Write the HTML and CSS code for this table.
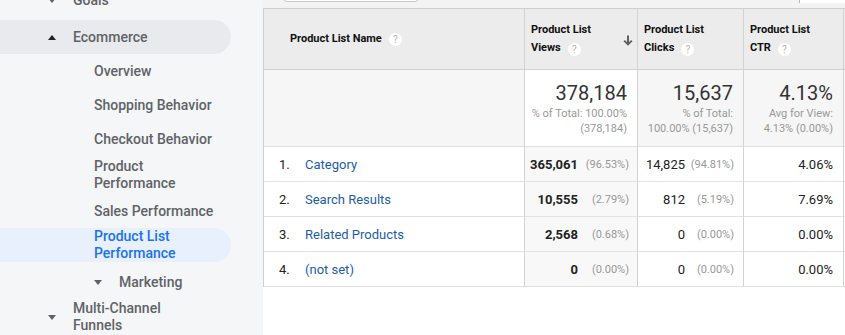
FILE: index.html
```html
<!DOCTYPE html>
<html>
<head>
<meta charset="utf-8">
<link rel="stylesheet" href="styles.css">
</head>
<body>
<div class="page">
  <nav class="sidebar">
    <div class="item lvl1 first"><span class="caret down"></span><span class="label">Goals</span></div>
    <div class="item lvl1 open"><span class="caret up"></span><span class="label">Ecommerce</span></div>
    <div class="item lvl2"><span class="label">Overview</span></div>
    <div class="item lvl2"><span class="label">Shopping Behavior</span></div>
    <div class="item lvl2"><span class="label">Checkout Behavior</span></div>
    <div class="item lvl2 two pp"><span class="label">Product<br>Performance</span></div>
    <div class="item lvl2"><span class="label">Sales Performance</span></div>
    <div class="item lvl2 two active"><span class="label">Product List<br>Performance</span></div>
    <div class="item lvl2 sub mk"><span class="caret down"></span><span class="label">Marketing</span></div>
    <div class="item lvl1 two mcf"><span class="caret down"></span><span class="label">Multi-Channel<br>Funnels</span></div>
  </nav>
  <main class="main">
    <div class="topbar">
      <div class="search"></div>
      <div class="topbox"></div>
    </div>
    <div class="grid">
      <div class="cell hd name-hd"><span>Product List Name</span><span class="help">?</span></div>
      <div class="cell hd metric-hd"><span class="hd-text">Product List<br>Views<span class="help">?</span></span>
        <svg class="sort" width="10" height="11" viewBox="0 0 10 11"><path d="M5 0.5v8.5M1.2 5.6L5 9.4l3.8-3.8" fill="none" stroke="#616161" stroke-width="2"/></svg></div>
      <div class="cell hd metric-hd"><span class="hd-text">Product List<br>Clicks<span class="help">?</span></span></div>
      <div class="cell hd metric-hd"><span class="hd-text">Product List<br>CTR<span class="help">?</span></span></div>
      <div class="cell hd extra"></div>

      <div class="cell sum gray"></div>
      <div class="cell sum"><div class="big">378,184</div><div class="small">% of Total: 100.00%<br>(378,184)</div></div>
      <div class="cell sum gray"><div class="big">15,637</div><div class="small">% of Total:<br>100.00% (15,637)</div></div>
      <div class="cell sum gray"><div class="big">4.13%</div><div class="small">Avg for View:<br>4.13% (0.00%)</div></div>
      <div class="cell sum gray extra"></div>

      <div class="cell row namec"><span class="idx">1.</span><a class="lnk">Category</a></div>
      <div class="cell row num sorted"><b>365,061</b><span class="pct">(96.53%)</span></div>
      <div class="cell row num clk"><span>14,825</span><span class="pct">(94.81%)</span></div>
      <div class="cell row num ctr">4.06%</div>
      <div class="cell row extra"></div>

      <div class="cell row namec"><span class="idx">2.</span><a class="lnk">Search Results</a></div>
      <div class="cell row num sorted"><b>10,555</b><span class="pct">(2.79%)</span></div>
      <div class="cell row num clk"><span>812</span><span class="pct">(5.19%)</span></div>
      <div class="cell row num ctr">7.69%</div>
      <div class="cell row extra"></div>

      <div class="cell row namec"><span class="idx">3.</span><a class="lnk">Related Products</a></div>
      <div class="cell row num sorted"><b>2,568</b><span class="pct">(0.68%)</span></div>
      <div class="cell row num clk"><span>0</span><span class="pct">(0.00%)</span></div>
      <div class="cell row num ctr">0.00%</div>
      <div class="cell row extra"></div>

      <div class="cell row namec"><span class="idx">4.</span><a class="lnk">(not set)</a></div>
      <div class="cell row num sorted"><b>0</b><span class="pct">(0.00%)</span></div>
      <div class="cell row num clk"><span>0</span><span class="pct">(0.00%)</span></div>
      <div class="cell row num ctr">0.00%</div>
      <div class="cell row extra"></div>
    </div>
  </main>
</div>
</body>
</html>
```

FILE: styles.css
```css
html, body {
  margin: 0;
  padding: 0;
}
body {
  width: 845px;
  height: 335px;
  overflow: hidden;
  background: #ffffff;
  font-family: Roboto, "Liberation Sans", Arial, sans-serif;
}
.page {
  display: flex;
  width: 845px;
  height: 335px;
  overflow: hidden;
}

/* Sidebar */
.sidebar {
  width: 263px;
  flex: 0 0 263px;
  background: #f5f6f7;
  margin-top: -17px;
  display: flex;
  flex-direction: column;
}
.item {
  display: flex;
  align-items: center;
  min-height: 34px;
  width: 231px;
  box-sizing: border-box;
  font-size: 14px;
  line-height: 17px;
  color: #5f6368;
  font-weight: 500;
  border-radius: 0 17px 17px 0;
  flex: 0 0 auto;
}
.item.lvl1 { padding-left: 48px; }
.item.lvl2 { padding-left: 94px; }
.item.sub { padding-left: 94px; }
.item.open {
  background: #e8eaed;
  margin-top: 3px;
}
.item.pp { margin: 2px 0 2px; }
.item.active {
  background: #e8f0fe;
  color: #1a73e8;
}
.item.mk { margin-top: 3px; }
.item.mcf { margin-top: 1px; }
.caret {
  width: 0;
  height: 0;
  border-left: 4px solid transparent;
  border-right: 4px solid transparent;
  margin-right: 17px;
}
.caret.down { border-top: 5px solid #5f6368; }
.caret.up { border-bottom: 5px solid #202124; }

/* Main */
.main {
  flex: 1 1 auto;
  min-width: 0;
  background: #ffffff;
  overflow: hidden;
}
.topbar {
  height: 8px;
  background: #f3f3f3;
  position: relative;
  overflow: hidden;
}
.search {
  position: absolute;
  left: 20px;
  top: -10px;
  width: 136px;
  height: 12px;
  background: #ffffff;
  border: 1px solid #c8c8c8;
  border-radius: 4px;
  box-sizing: border-box;
}
.topbox {
  position: absolute;
  left: 536px;
  top: -2px;
  width: 60px;
  height: 5px;
  background: #ffffff;
  border-left: 1px solid #b8b8b8;
}
.grid {
  display: grid;
  grid-template-columns: 261px 113px 106px 100px 40px;
  grid-template-rows: 61px 77px 35px 35px 35px 35px;
  border-top: 1px solid #d0d0d0;
  border-left: 1px solid #d0d0d0;
  width: max-content;
}
.cell {
  box-sizing: border-box;
  border-right: 1px solid #d3d3d3;
  border-bottom: 1px solid #e2e2e2;
  color: #222;
}
.hd {
  background: #ececec;
  border-bottom-color: #d0d0d0;
  font-size: 11px;
  font-weight: 700;
  line-height: 18px;
  color: #111;
  display: flex;
  align-items: center;
}
.name-hd { padding-left: 26px; }
.metric-hd {
  padding-left: 6px;
  position: relative;
}
.help {
  display: inline-block;
  width: 13px;
  height: 13px;
  border-radius: 50%;
  background: #ffffff;
  color: #b5b5b5;
  font-size: 10px;
  line-height: 13px;
  text-align: center;
  font-weight: 400;
  margin-left: 7px;
  vertical-align: -2px;
}
.sort {
  position: absolute;
  right: 4px;
  top: 26px;
}
.sum {
  padding: 10px 10px 0 6px;
  text-align: right;
  background: #ffffff;
  border-bottom-color: #dedede;
}
.sum.gray { background: #f6f6f6; }
.big {
  font-size: 20px;
  line-height: 26px;
  color: #333;
}
.small {
  font-size: 11px;
  line-height: 15px;
  color: #999;
}
.row {
  display: flex;
  align-items: center;
  font-size: 13px;
  color: #222;
}
.namec { padding-left: 15px; }
.idx {
  width: 26px;
  flex: 0 0 26px;
}
.lnk {
  color: #1c5ea8;
}
.num {
  justify-content: flex-end;
}
.sorted {
  background: #f8f8f8;
  padding-right: 8px;
}
.sorted .pct { width: 51px; }
.clk {
  padding-right: 9px;
}
.clk .pct { width: 49px; }
.pct {
  text-align: right;
  font-size: 11px;
  color: #999;
}
.ctr { padding-right: 10px; }
.extra { border-right: none; }
b { font-weight: 700; }
```
